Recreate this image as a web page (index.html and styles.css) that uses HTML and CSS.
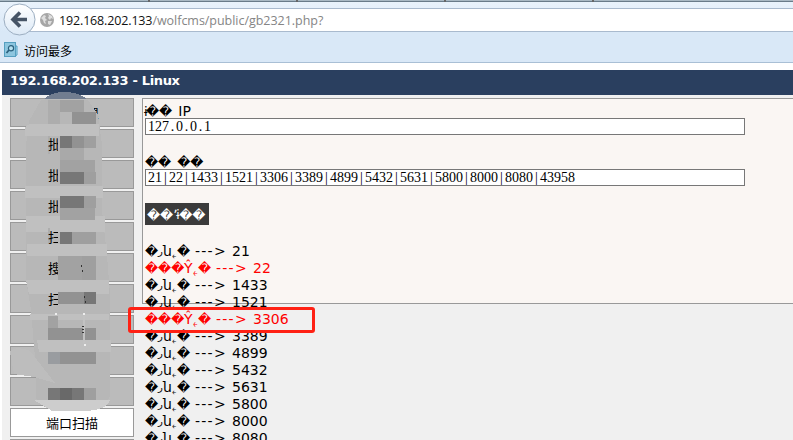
FILE: index.html
```html
<!DOCTYPE html>
<html lang="zh-CN">
<head>
<meta charset="utf-8">
<title>192.168.202.133 - Linux</title>
<link rel="stylesheet" href="styles.css">
</head>
<body>
<header class="browser">
  <div class="tabs"><i></i><i></i><i></i><i></i></div>
  <div class="nav">
    <svg class="back" width="33" height="33" viewBox="0 0 33 33"><defs><linearGradient id="g" x2="0" y2="1"><stop stop-color="#fff"/><stop offset="1" stop-color="#dce9f6"/></linearGradient></defs><circle cx="16.5" cy="16.5" r="15.5" fill="url(#g)" stroke="#9caec1"/><path d="M24 16.5H11M17 9.5L10 16.5L17 23.5" fill="none" stroke="#465466" stroke-width="3.6"/></svg>
    <div class="address">
      <svg width="14" height="14" viewBox="0 0 14 14"><circle cx="7" cy="7" r="7" fill="#a6a6a6"/><path d="M1 5L4 2L6 3L5 5L7 7L5 8L6 11L4 10L3 7ZM8 1L12 3L13 6L11 5L10 7L8 5L9 3ZM8 8L12 8L10 12L8 11Z" fill="#dedede"/></svg>
      <span class="url"><b>192.168.202.133</b>/wolfcms/public/gb2321.php?</span>
    </div>
  </div>
  <div class="bookmarks">
    <svg width="14" height="16" viewBox="0 0 14 16"><path d="M11 4h2v9l-2 1" fill="#b5deef" stroke="#4d9dc0"/><rect x=".5" y=".5" width="11" height="14" fill="#8dc6df" stroke="#559fc0"/><circle cx="7" cy="6.3" r="2.6" fill="#b8e1f0" stroke="#2b617e" stroke-width="1.2"/><path d="M5 8L2.5 11" stroke="#2b617e" stroke-width="1.8"/></svg>
    <span>访问最多</span>
  </div>
</header>
<main class="page">
  <h1>192.168.202.133 - Linux</h1>
  <div class="columns">
    <nav class="side">
      <a><span class="end">理</span></a><a><span>批</span></a><a><span>批</span></a><a><span>批</span></a><a><span>扫</span></a><a><span>搜</span></a><a><span>扫</span></a><a></a><a></a><a></a><a class="active">端口扫描</a><a></a>
      <svg class="smudge" width="124" height="350" viewBox="10 90 124 350" shape-rendering="crispEdges">
        <path d="M44 99Q51 92 64 92Q78 92 87 99Z" fill="#717d90"/>
        <path d="M41 100H88L98 115L102 145V210L107 255L110 295V395Q107 410 85 411H58Q45 411 36 398V370L31 310L26 280V145L29 121Z" fill="#b7b7b7"/>
        <path d="M10 352Q15 345 30 351L55 383L34 377L14 374Z" fill="#bdbdbd"/>
        <path d="M30 124H99V136H25V127ZM25 186H103V198H25ZM26 216H105V232H26ZM27 244H107V256H27ZM26 280H109V294H29ZM37 340H111V352H39ZM30 314H109V320H30Z" fill="#c0c0c0"/>
        <path d="M34 400H110Q107 410 85 411H52Z" fill="#cdcdcd"/>
        <path d="M48 100H60V124H48ZM48 136H50V154H48ZM48 228H50V244H48Z" fill="#adadad"/>
        <path d="M60 100H84V112H60ZM60 160H95V172H60ZM60 208H95V220H60ZM58 256H82V280H58ZM48 316H58V328H48Z" fill="#a2a2a2"/>
        <path d="M72 112H96V124H72ZM72 136H96V148H72ZM72 172H96V184H72ZM72 196H96V208H72ZM72 232H96V244H72ZM58 292H94V304H58ZM48 328H96V340H48ZM48 352H96V364H48Z" fill="#929292"/>
        <path d="M60 148H84V160H60Z" fill="#a9a9a9"/>
        <path d="M60 136H72V148H60ZM60 172H84V184H60ZM60 196H84V208H60ZM60 232H72V244H60ZM84 292H96V304H84ZM48 388H84V400H48Z" fill="#777"/>
        <path d="M84 136H96V148H84ZM84 172H96V184H84ZM84 196H96V208H84ZM72 232H96V244H72ZM84 388H96V400H84ZM82 256H96V280H82Z" fill="#9f9f9f"/>
        <path d="M60 388H72V400H60Z" fill="#696969"/>
        <path d="M48 352H60V364H48Z" fill="#999ca0"/>
        <path d="M83 316H85V343H83Z" fill="#c2c2c2"/>
        <path d="M55 313H57V315H55ZM83 313H85V315H83ZM84 344H86V346H84Z" fill="#eee"/>
        <path d="M82 326h2v1h-2zm0 3h2v1h-2zm0 3h2v1h-2zM81 265h1v2h-1zm1 5h1v2h-1zm2 26h1v2h-1zm1 5h1v2h-1z" fill="#333"/>
      </svg>
    </nav>
    <section class="content">
      <div class="panel">
        <label><span class="seg i">ɨ</span><span class="rep">��</span><span class="ip">IP</span></label>
        <div class="field">127<s>.</s>0<s>.</s>0<s>.</s>1</div>
        <label class="second"><span class="rep">��</span> <span class="rep r2">��</span></label>
        <div class="field">21<s>|</s>22<s>|</s>1433<s>|</s>1521<s>|</s>3306<s>|</s>3389<s>|</s>4899<s>|</s>5432<s>|</s>5631<s>|</s>5800<s>|</s>8000<s>|</s>8080<s>|</s>43958</div>
        <div class="scan"><span class="rep">��</span><span class="seg comma">ʼ</span><span class="seg bi">ɨ</span><span class="rep">��</span></div>
      </div>
      <div class="results">
        <p><span class="closed"><i>�</i><i>ر</i><i>ն</i><i>˿</i><i>�</i></span><span class="arrow">---&gt;</span>21</p>
        <p class="open"><span class="rep">���</span><span class="seg y">Ŷ</span><span class="seg ring">˿</span><span class="rep one">�</span><span class="arrow">---&gt;</span>22</p>
        <p><span class="closed"><i>�</i><i>ر</i><i>ն</i><i>˿</i><i>�</i></span><span class="arrow">---&gt;</span>1433</p>
        <p><span class="closed"><i>�</i><i>ر</i><i>ն</i><i>˿</i><i>�</i></span><span class="arrow">---&gt;</span>1521</p>
        <p class="open"><span class="rep">���</span><span class="seg y">Ŷ</span><span class="seg ring">˿</span><span class="rep one">�</span><span class="arrow">---&gt;</span>3306</p>
        <p><span class="closed"><i>�</i><i>ر</i><i>ն</i><i>˿</i><i>�</i></span><span class="arrow">---&gt;</span>3389</p>
        <p><span class="closed"><i>�</i><i>ر</i><i>ն</i><i>˿</i><i>�</i></span><span class="arrow">---&gt;</span>4899</p>
        <p><span class="closed"><i>�</i><i>ر</i><i>ն</i><i>˿</i><i>�</i></span><span class="arrow">---&gt;</span>5432</p>
        <p><span class="closed"><i>�</i><i>ر</i><i>ն</i><i>˿</i><i>�</i></span><span class="arrow">---&gt;</span>5631</p>
        <p><span class="closed"><i>�</i><i>ر</i><i>ն</i><i>˿</i><i>�</i></span><span class="arrow">---&gt;</span>5800</p>
        <p><span class="closed"><i>�</i><i>ر</i><i>ն</i><i>˿</i><i>�</i></span><span class="arrow">---&gt;</span>8000</p>
        <p><span class="closed"><i>�</i><i>ر</i><i>ն</i><i>˿</i><i>�</i></span><span class="arrow">---&gt;</span>8080</p>
      </div>
      <div class="highlight"></div>
    </section>
  </div>
</main>
</body>
</html>
```
FILE: styles.css
```css
* { box-sizing: border-box; }
body { margin: 0; height: 440px; overflow: hidden; background: #fff; color: #000; font: 14px/17px "DejaVu Sans", sans-serif; }
.browser { height: 63px; background: linear-gradient(#eaf3fc, #d9e8f7 32px); border-bottom: 1px solid #a9bfd5; }
.tabs { height: 2px; background: #a9b9c4; border-bottom: 1px solid #697b89; display: flex; padding-left: 148px; gap: 146px; }
.tabs i { width: 2px; height: 2px; background: #666; flex: none; }
.nav { height: 30px; padding: 6px 0 0 20px; position: relative; }
.back { position: absolute; left: 3px; top: 1px; }
.address { height: 24px; background: #fff; border: 1px solid #a9bace; border-right: 0; display: flex; align-items: center; padding-left: 19px; gap: 5px; }
.url { margin-top: 2px; font: 12.5px/20px "Open Sans", "Noto Sans", sans-serif; color: #858585; white-space: nowrap; letter-spacing: -.03px; }
.url b { color: #111; font-weight: normal; letter-spacing: -.15px; }
.bookmarks { height: 30px; display: flex; gap: 6px; align-items: center; padding: 6px 0 0 4px; font: 12px/17px "Noto Sans CJK SC", sans-serif; }
.page { margin: 7px 0 0 2px; height: 370px; background: #f0f0f0; overflow: hidden; }
h1 { margin: 0; height: 25px; padding-left: 8px; background: #2a3f5f; color: #fff; font: bold 13px/21px "DejaVu Sans", sans-serif; letter-spacing: -.34px; }
.columns { display: flex; padding: 3px 0 0 8px; gap: 8px; }
.side { width: 124px; flex: none; display: flex; flex-direction: column; gap: 2px; position: relative; }
.side a { height: 29px; flex: none; border: 1px solid #999; background: #bbb; text-align: center; font: 13px/28px "Noto Sans CJK SC", sans-serif; }
.side a span { display: block; width: 14px; margin-left: 37px; }
.side a .end { margin-left: 74px; }
.side .active { background: #fff; }
.smudge { position: absolute; left: 0; top: -8px; }
.side a:nth-child(n+2):nth-child(-n+7) span { position: relative; z-index: 1; width: 10px; height: 26px; overflow: hidden; }
.content { flex: 1; height: 342px; position: relative; }
.panel { height: 206px; border: 1px solid #999; border-right: 0; background: #faf6f3; padding: 4px 0 0 2px; display: flex; flex-direction: column; }
.panel label { display: flex; height: 15px; line-height: 17px; white-space: pre; }
.panel .second { margin-top: 19px; }
.second, .second + .field, .scan { flex: none; }
.r2 { margin-left: 1px; }
.rep { font-size: 12.8px; display: inline-block; }
.seg { display: inline-block; flex: none; }
.i { width: 2px; margin-left: -1px; font-size: 13px; }
.ip { margin-left: 6px; }
.second .rep + .rep { margin-left: 6px; }
.field { width: 600px; height: 17px; border: 1px solid #777; background: #fff; padding-left: 2px; font: 14px/15px "Liberation Serif", serif; white-space: pre; }
.field s { display: inline-block; width: 7px; text-align: center; text-decoration: none; }
.scan { width: 64px; height: 22px; margin-top: 17px; padding: 4px 2px 0; background: #3b3b3b; color: #fff; display: flex; white-space: nowrap; }
.comma { width: 3px; }
.bi { width: 3px; font-size: 12px; }
.results { margin: -61px 0 0 3px; position: relative; }
.results p { margin: 0; height: 17px; display: flex; white-space: pre; }
.closed { width: 50px; display: flex; }
.closed i { font-style: normal; font-size: 12.8px; flex: none; }
.closed i:first-child { width: 13px; }
.closed i:nth-child(2) { width: 5px; font-size: 10px; }
.closed i:nth-child(3) { width: 9px; font-size: 14px; }
.closed i:nth-child(4) { width: 5px; }
.arrow { width: 37px; letter-spacing: 1.25px; }
.open { color: #f00; }
.open .rep { width: 39px; }
.open .y { width: 9px; }
.open .ring { width: 5px; }
.open .one { width: 18px; }
.highlight { position: absolute; left: -14px; top: 209px; width: 187px; height: 26px; border: 3px solid #ff2114; border-radius: 3px; }
```
